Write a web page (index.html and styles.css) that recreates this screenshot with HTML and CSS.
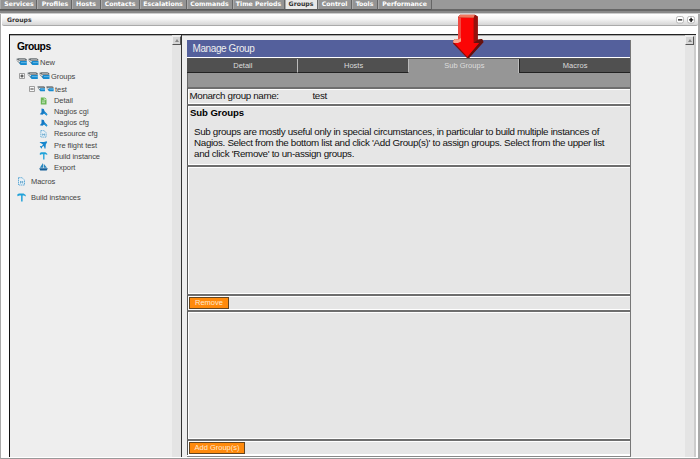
FILE: index.html
```html
<!DOCTYPE html>
<html lang="en">
<head>
<meta charset="utf-8">
<title>Groups</title>
<link rel="stylesheet" href="styles.css">
</head>
<body>
<svg class="defs" aria-hidden="true">
  <symbol id="hosts" viewBox="0 0 23 8">
    <path d="M0 1 2.5 .3H9l1.8 1v1.5H4L2.5 2.5ZM12 1l2.5-.7H20.5l1.8 1v1.5h-6.8L14 2.5Z" fill="#666e72"/>
    <path d="M3 1.5h6M15 1.5h6" stroke="#c7cbcd" stroke-width=".6"/>
    <path d="M4.2 3h6.6V7H4.6L3 5ZM16 3h6.5V7h-6.2L14.7 5Z" fill="#168bd0"/>
    <path d="M1 2.5l3 3M12.8 2.5l3 3" stroke="#5a6468" stroke-width=".8"/>
    <path d="M5 4.6h5.8M17 4.6h5.4" stroke="#83c7e8" stroke-width=".7"/>
  </symbol>
  <symbol id="doc" viewBox="0 0 8 8"><path d="M1.3.5h4L7 2v5.5H1.3Z" fill="#69b654"/><path d="M4.7.6v2H7M2.5 4h3M2.5 5.7h3" stroke="#d5ecd0" stroke-width=".8" fill="none"/></symbol>
  <symbol id="wrench" viewBox="0 0 8 8"><path d="M2 .5 4.3 1l.8 2.2L8 6.2 7.2 7.8 4.5 5.4 3 6.8.3 6.3 2 4.3Z" fill="#1479c4"/><path d="M5 4.7 7.3 7" stroke="#22a7e2"/></symbol>
  <symbol id="cfg" viewBox="0 0 8 9"><path d="M1 .7h3.5L7 3v5H1Z" fill="#e8f1f7" stroke="#459ccf" stroke-width=".9" stroke-dasharray="1.3 .7"/><path d="M3 4v2.5M5.2 4v2.5M3 5h2.5" stroke="#5a9fc7" stroke-width=".8"/></symbol>
  <symbol id="plane" viewBox="0 0 8 8"><path d="M.3 1h4.2L7 .3l.7.7L6.3 3.4 6 7.5l-.8.2-.9-2.8-1.8 1 .1 1.4-.7.3L.3 5.4l.8-.3 1 .2 1.5-1.8L.3 1.6Z" fill="#1687ce"/></symbol>
  <symbol id="hammer" viewBox="0 0 9 9"><path d="M.4 1.2 2 .4h4.6L8.7 2v1.5L7 2.5H5.6V8.5H4.1V2.5H2.5L.4 3.3Z" fill="#20a2d9"/></symbol>
  <symbol id="ship" viewBox="0 0 9 8"><path d="M4 0 .8 4.8H4ZM4.7.8 8 4.8H4.7Z" fill="#2887bf"/><path d="M.2 5.3h8.6L7.7 7.6H1.2Z" fill="#145e98"/></symbol>
</svg>
<div class="app">
  <nav class="nav">
    <a class="t1">Services</a><a class="t2">Profiles</a><a class="t3">Hosts</a><a class="t4">Contacts</a><a class="t5">Escalations</a><a class="t6">Commands</a><a class="t7">Time Periods</a><a class="t8 active">Groups</a><a class="t9">Control</a><a class="t10">Tools</a><a class="t11">Performance</a>
  </nav>
  <header class="bar"><span>Groups</span>
    <svg class="controls" viewBox="0 0 20 8"><rect x=".5" y=".5" width="7" height="6.5" rx="1.8" fill="#fff" stroke="#aaa" stroke-width=".8"/><rect x="11.5" y=".5" width="7" height="6.5" rx="1.8" fill="#fff" stroke="#aaa" stroke-width=".8"/><path d="M2 3.9h4.2M13 3.9h4.2M15.1 1.8V6" stroke="#111" stroke-width="1.4"/></svg>
  </header>
  <main class="frame">
    <aside class="side">
      <h1>Groups</h1>
      <div class="item new"><svg class="i-hosts"><use href="#hosts"/></svg>New</div>
      <div class="item grp"><svg class="toggle" viewBox="0 0 6 6"><path d="M.5.5h5v5h-5Z" fill="#f7f7f7" stroke="#888" stroke-width=".8"/><path d="M1.4 3h3.2M3 1.4v3.2" stroke="#222" stroke-width=".9"/></svg><svg class="i-hosts"><use href="#hosts"/></svg>Groups</div>
      <div class="item test"><svg class="toggle" viewBox="0 0 6 6"><path d="M.5.5h5v5h-5Z" fill="#f7f7f7" stroke="#888" stroke-width=".8"/><path d="M1.4 3h3.2" stroke="#222" stroke-width=".9"/></svg><svg class="i-small" viewBox="0 0 23 8"><use href="#hosts" width="23" height="8"/></svg>test</div>
      <ul>
        <li><svg><use href="#doc"/></svg>Detail</li>
        <li><svg><use href="#wrench"/></svg>Nagios cgi</li>
        <li><svg><use href="#wrench"/></svg>Nagios cfg</li>
        <li><svg><use href="#cfg"/></svg>Resource cfg</li>
        <li><svg><use href="#plane"/></svg>Pre flight test</li>
        <li><svg><use href="#hammer"/></svg>Build instance</li>
        <li><svg><use href="#ship"/></svg>Export</li>
      </ul>
      <div class="item macros"><svg class="i-one"><use href="#cfg"/></svg>Macros</div>
      <div class="item build"><svg class="i-one"><use href="#hammer"/></svg>Build instances</div>
    </aside>
    <div class="scroll"><i></i></div>
    <section class="content">
      <div class="form">
        <h2>Manage Group</h2>
        <div class="tabs"><a>Detail</a><a>Hosts</a><a class="on">Sub Groups</a><a>Macros</a></div>
        <div class="strip"></div>
        <div class="cell name"><span>Monarch group name:</span><span>test</span></div>
        <div class="cell info"><h3>Sub Groups</h3>
          <p>Sub groups are mostly useful only in special circumstances, in particular to build multiple instances of<br>Nagios. Select from the bottom list and click 'Add Group(s)' to assign groups. Select from the upper list<br>and click 'Remove' to un-assign groups.</p></div>
        <div class="cell upper"></div>
        <div class="cell act"><button class="remove">Remove</button></div>
        <div class="cell lower"></div>
        <div class="cell last"><button class="add">Add Group(s)</button></div>
      </div>
    </section>
    <div class="scroll right"><i></i></div>
  </main>
</div>
<svg class="arrow" viewBox="0 0 32 46">
  <path d="M6 3 8 .7H23L25.7 2.5v23.2l4.3-.7 1.5 3L17 44h-2L1 29.5V27l2-2 3 .5Z" fill="#8c0d08"/>
  <path d="M6.5 3.5h15.3V29h5.5L15.5 43 2.5 29H6.5Z" fill="#fb0505"/>
  <path d="M6 3.5 8 .7H23L21.8 3.8Z" fill="#f1775d"/>
  <path d="M21.8 3.8 23 .9l2.7 1.6v23.2L21.8 29Z" fill="#96120d"/>
  <path d="M6 3.5h3V26l-3 2Z" fill="#f04a42"/>
  <path d="M1 27 3 25l3.5.5L9 24v3.5L6 29 1.5 29Z" fill="#f8a78e"/>
  <path d="M21.8 29 25.7 25.7 30 25l1.5 3L17 44l-1.5-1L27.3 29Z" fill="#65120f"/>
</svg>
</body>
</html>
```

FILE: styles.css
```css
* { box-sizing: border-box; }
body { margin: 0; background: #fff; font-family: "Liberation Sans", Arial, sans-serif; color: #222; overflow: hidden; }
svg { display: block; flex: none; }
.defs { position: absolute; width: 0; height: 0; }
.app { width: 700px; height: 459px; display: flex; flex-direction: column; border-left: 1px solid #aaa; border-right: 2px solid #aaa; border-bottom: 1px solid #999; }
.nav { height: 14px; flex: none; display: flex; align-items: flex-start; background: linear-gradient(#999 0 9px, #666 9px 11px, #888 11px 13px, #ccc 13px); margin: 0 -2px 0 -1px; }
.nav a { height: 10px; flex: none; background: #949494; color: #fff; border-right: 1px solid #666; border-bottom: 1px solid #555; box-shadow: inset 1px 0 #aaa; font: bold 6.2px/8px "DejaVu Sans", sans-serif; text-align: center; white-space: nowrap; }
.nav .active { background: #e8e8e8; color: #333; }
.t1 { width: 37px; } .t2 { width: 35px; } .t3 { width: 29px; } .t4 { width: 39px; } .t5 { width: 47px; } .t6 { width: 46px; } .t7 { width: 52px; } .t8 { width: 33px; } .t9 { width: 34px; } .t10 { width: 26px; } .t11 { width: 54px; }
.nav .t1, .nav .t2 { padding-left: 2px; }
.bar { height: 12px; flex: none; margin-left: 1px; padding: 0 2px 0 5px; display: flex; justify-content: space-between; align-items: center; background: linear-gradient(#fff, #f4f4f4 45%, #d6d6d6); border-bottom: 1px solid #aaa; border-radius: 2px; font: bold 6.1px/10px "DejaVu Sans", sans-serif; color: #333; }
.controls { width: 20px; height: 8px; }
.frame { height: 423px; margin: 8px 2px 0 8px; display: flex; border-left: 1px solid #111; border-top: 1px solid #222; background: #eee; box-shadow: inset 0 1px #aaa; }
.side { width: 162px; padding: 4px 0 0 7px; font-size: 7.5px; letter-spacing: -.05px; color: #444; }
h1 { margin: 0; font-size: 10.3px; line-height: 16px; letter-spacing: -.5px; color: #000; }
.item { display: flex; align-items: center; height: 10px; white-space: nowrap; }
.new { margin-top: 2px; } .grp { margin: 4px 0 0 2px; } .test { margin: 3px 0 0 12px; }
.i-hosts { width: 23px; height: 8px; margin-right: 1px; margin-left: -1px; } .i-small { width: 17px; height: 6px; }
.new { letter-spacing: 0; }
.toggle { width: 6px; height: 6px; margin-right: 3px; }
.test .toggle { margin-right: 2px; }
.i-small { margin-right: 1px; }
ul { margin: 1px 0 0 22px; padding: 0; list-style: none; }
li { height: 11.15px; display: flex; align-items: center; white-space: nowrap; }
li svg { width: 9px; height: 8px; margin-right: 6px; }
.macros { margin-top: 4px; } .build { margin-top: 6px; }
.i-one { width: 9px; height: 9px; margin-right: 5px; }
.scroll { width: 9px; background: #e4e4e4; }
.scroll i { display: block; height: 9px; margin-top: 1px; border: 1px solid #eee; border-right-color: #555; border-bottom-color: #555; background: #d5d5d5; padding: 2px 1px; }
.scroll i::before { content: ""; display: block; width: 0; margin: auto; border: 2px solid transparent; border-top: 0; border-bottom: 3px solid #888; }
.content { flex: 1; border-left: 1px solid #333; padding: 5px 0 0 5px; }
.right { width: 11px; border-right: 2px solid #ccc; }
.form { width: 444px; height: 417px; background: #fff; border-right: 1px solid #777; border-bottom: 1px solid #888; color: #111; }
h2 { margin: 0; height: 17px; padding-left: 5.5px; font-size: 10px; letter-spacing: -.4px; font-weight: normal; line-height: 17px; background: #54609c; color: #eee; }
.tabs { height: 15px; display: flex; margin-top: 1px; border-top: 1px solid #555; background: #969696; }
.tabs a { width: 111px; padding-left: 2px; border-right: 1px solid #bbb; border-bottom: 1px solid #222; background: #505050; color: #ddd; font-size: 7.5px; line-height: 14px; text-align: center; }
.tabs a:last-child { padding-left: 0; border-left: 1px solid #222; border-right: 0; }
.tabs .on { background: #969696; border-bottom: 0; }
.strip { height: 14px; background: #969696; border-left: 1px solid #666; }
.cell { border-left: 1px solid #555; border-top: 2px solid #6e6e6e; background: #e6e6e6; box-shadow: inset 1px 1px #fff, inset 0 -1px #fff; }
.name { height: 17px; padding-left: 1.5px; display: flex; font-size: 9.8px; letter-spacing: -.35px; line-height: 14px; }
.name span:first-child { width: 123px; }
.info { height: 61px; padding-left: 2px; }
h3 { margin: 0; font-size: 9.6px; letter-spacing: -.1px; line-height: 13px; color: #000; }
p { margin: 7px 0 0 4px; font-size: 9.8px; letter-spacing: -.32px; line-height: 11.2px; white-space: nowrap; }
.upper { height: 129px; } .act { height: 16px; } .lower { height: 129px; } .last { height: 16px; }
.act, .last { padding: 1px 0 0 1px; }
button { display: block; height: 12px; padding: 0; font: 7.5px/10px "Liberation Sans", Arial, sans-serif; color: #ffe8d0; background: #ff8a0c; border: 1px solid #65451f; }
.remove { width: 40px; } .add { width: 56px; }
.arrow { position: absolute; left: 452px; top: 14px; width: 32px; height: 46px; }
```
